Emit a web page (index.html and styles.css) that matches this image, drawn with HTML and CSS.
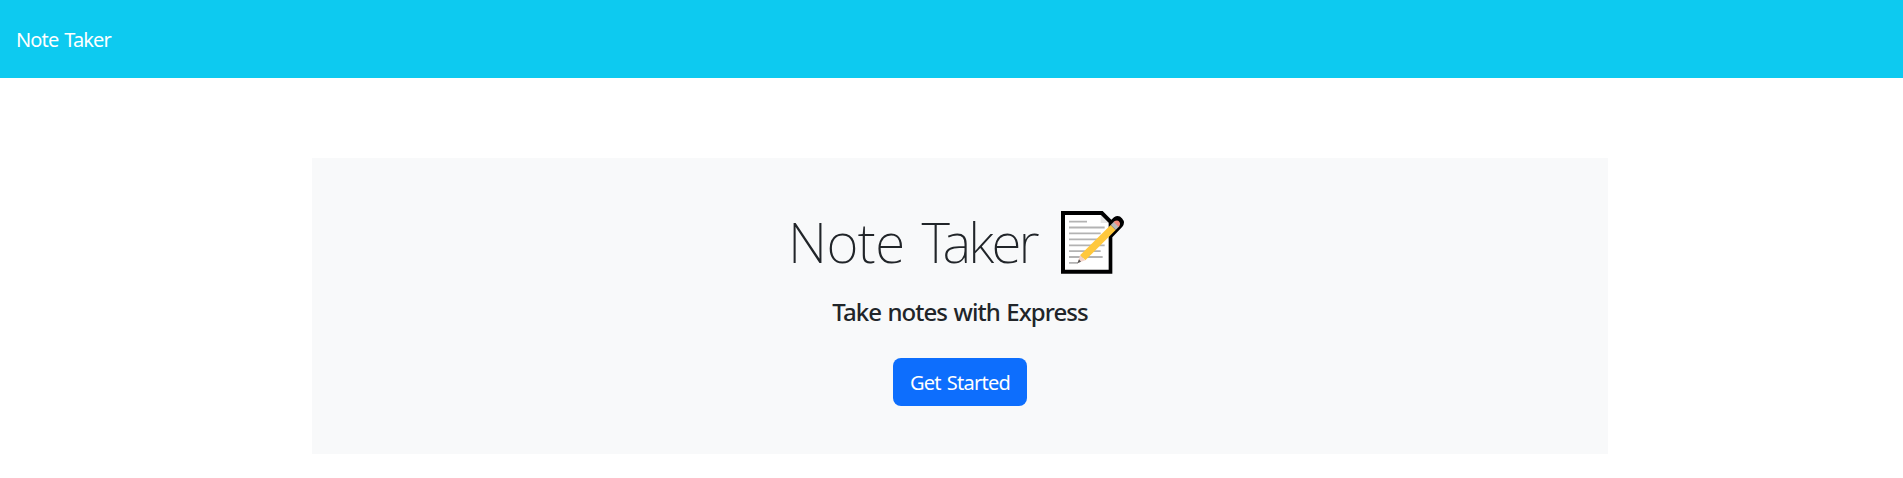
FILE: index.html
```html
<!DOCTYPE html>
<html lang="en">
<head>
<meta charset="utf-8">
<title>Note Taker</title>
<link rel="stylesheet" href="styles.css">
</head>
<body>
<nav class="navbar"><a class="navbar-brand">Note Taker</a></nav>
<main class="container">
  <section class="hero">
    <h1 class="title"><span class="title-text">Note <span class="title-tight">Taker</span></span>
      <svg class="memo" viewBox="60 27 195 198" aria-hidden="true">
        <path d="M63 33H188L214 59L222 52A19 19 0 0 1 247 80L217 112V221H63Z" fill="#000"/>
        <path d="M75 45H182L206 69V209H75Z" fill="#fff"/>
        <path d="M182 45V69H206Z" fill="#e6e6e6"/>
        <path d="M87 65H141M87 82.500H194M87 100H182M87 118H182M87 136H194M87 153.500H182M87 171H188M87 188.500H114" stroke="#b3b3b3" stroke-width="5.500"/>
        <path d="M212 75L227 90L136 181L120 166Z" fill="#ffc83d"/>
        <path d="M120 166L136 181L113 189Z" fill="#f3d3c8"/>
        <path d="M117 178L123 185L112 190Z" fill="#555"/>
        <path d="M223 64L238 79L227 90L212 75Z" fill="#b9b9b9"/>
        <path d="M221 66Q231 58 238 65Q243 72 236 81Z" fill="#f58b7b"/>
      </svg>
    </h1>
    <h4 class="subtitle">Take notes with Express</h4>
    <a class="btn"><span>Get Started</span></a>
  </section>
</main>
</body>
</html>
```
FILE: styles.css
```css
* { box-sizing: border-box; }
body {
  margin: 0;
  background: #fff;
  color: #212529;
  font-family: "Segoe UI", "Noto Sans", "Open Sans", sans-serif;
}
.navbar {
  height: 78px;
  padding: 2px 16px 0;
  display: flex;
  align-items: center;
  background: #0dcaf0;
}
.navbar-brand {
  color: #fff;
  font-size: 20px;
  line-height: 30px;
  letter-spacing: -0.85px;
  word-spacing: 1.5px;
}
.container { width: 1296px; margin: 80px 0 0 312px; }
.hero {
  height: 296px;
  padding-top: 48px;
  display: flex;
  flex-direction: column;
  align-items: center;
  background: #f8f9fa;
}
.title {
  margin: 0 3px 0 0;
  width: 333px;
  height: 75px;
  display: flex;
  align-items: flex-start;
  justify-content: space-between;
  font-size: 55px;
  font-weight: 250;
  line-height: 71px;
}
.title-text { margin-left: -4px; white-space: nowrap; letter-spacing: -0.6px; word-spacing: 3px; }
.title-tight { letter-spacing: -2.8px; }
.memo { width: 65px; height: 66px; margin-top: 3px; flex: none; }
.subtitle {
  margin: 16px 0 0;
  font-size: 24px;
  font-weight: 500;
  line-height: 29px;
  letter-spacing: -0.95px;
  word-spacing: 1.2px;
}
.btn {
  width: 134px;
  height: 48px;
  margin-top: 32px;
  padding-top: 1px;
  display: flex;
  align-items: center;
  justify-content: center;
  border-radius: 8px;
  background: #0d6efd;
  color: #fff;
  font-size: 20px;
  line-height: 30px;
  letter-spacing: -0.75px;
  word-spacing: 1.5px;
}
```
